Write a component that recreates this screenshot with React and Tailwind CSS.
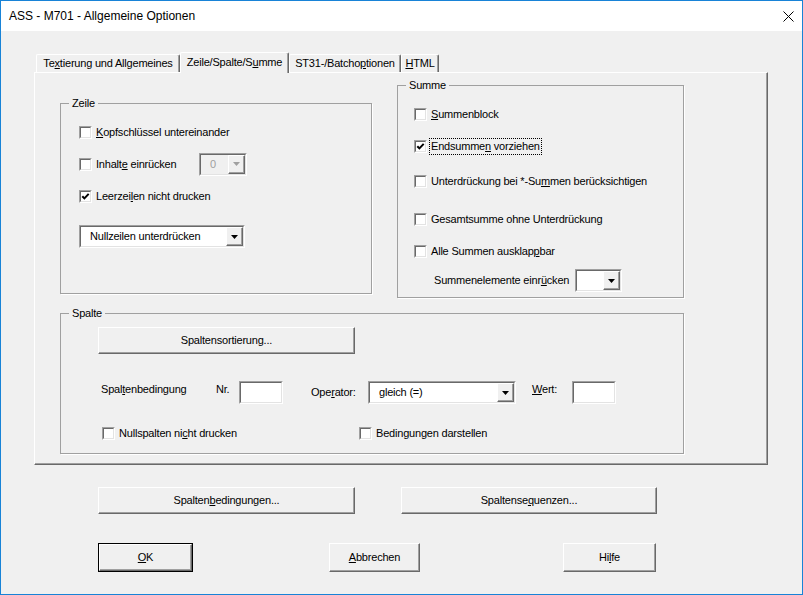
import React from "react";

// Windows classic dialog: ASS - M701 - Allgemeine Optionen

const raised =
  "bg-[#f0f0f0] border border-t-white border-l-white border-r-[#696969] border-b-[#696969] shadow-[inset_-1px_-1px_0_#a0a0a0]";

function Box({ checked }) {
  return (
    <span className="w-[13px] h-[13px] shrink-0 flex border border-t-[#a0a0a0] border-l-[#a0a0a0] border-b-white border-r-white">
      <span className="flex-1 flex items-center justify-center bg-white border border-t-[#696969] border-l-[#696969] border-b-[#e3e3e3] border-r-[#e3e3e3]">
        {checked && (
          <svg width="9" height="9" viewBox="0 0 9 9">
            <path d="M1.3 4.2 L3.4 6.4 L7.7 1.9" fill="none" stroke="#000" strokeWidth="2" />
          </svg>
        )}
      </span>
    </span>
  );
}

function Check({ checked, focus, className = "", children }) {
  return (
    <div className={"flex items-center h-[16px] " + className}>
      <Box checked={checked} />
      {focus ? (
        <span className="ml-[2px] px-[1px] leading-[15px] border border-dotted border-black">{children}</span>
      ) : (
        <span className="ml-[4px] whitespace-nowrap">{children}</span>
      )}
    </div>
  );
}

function Combo({ text, disabled, className = "" }) {
  return (
    <div className={"flex shrink-0 border border-t-[#a0a0a0] border-l-[#a0a0a0] border-b-white border-r-white " + className}>
      <div
        className={
          "flex-1 flex items-center border border-t-[#696969] border-l-[#696969] border-b-[#e3e3e3] border-r-[#e3e3e3] " +
          (disabled ? "bg-[#f0f0f0]" : "bg-white")
        }
      >
        <span className={"flex-1 pl-[9px] whitespace-nowrap " + (disabled ? "text-[#a0a0a0]" : "")}>{text}</span>
        <span className={"w-[17px] self-stretch flex items-center justify-center " + raised}>
          <svg width="7" height="4" viewBox="0 0 7 4">
            <path d="M0 0 H7 L3.5 4 Z" fill={disabled ? "#a0a0a0" : "#000"} />
          </svg>
        </span>
      </div>
    </div>
  );
}

function Input({ className = "" }) {
  return (
    <div className={"flex shrink-0 border border-t-[#a0a0a0] border-l-[#a0a0a0] border-b-white border-r-white " + className}>
      <div className="flex-1 bg-white border border-t-[#696969] border-l-[#696969] border-b-[#e3e3e3] border-r-[#e3e3e3]" />
    </div>
  );
}

function Btn({ className = "", children }) {
  return <div className={"flex items-center justify-center shrink-0 " + raised + " " + className}>{children}</div>;
}

function Group({ label, className = "", children }) {
  return (
    <div className={"flex flex-col shrink-0 border border-[#a0a0a0] shadow-[1px_1px_0_#fff] " + className}>
      <span className="self-start -mt-[7px] ml-[8px] px-[3px] bg-[#f0f0f0] leading-[13px]">{label}</span>
      {children}
    </div>
  );
}

const tab =
  "flex items-center justify-center shrink-0 rounded-t-[2px] border-t border-l border-r border-t-white border-l-white border-r-[#696969] shadow-[inset_-1px_0_0_#a0a0a0] whitespace-nowrap";

export default function App() {
  return (
    <div className="w-[803px] h-[595px] border border-[#1883d7] bg-[#f0f0f0] flex flex-col overflow-hidden font-['Liberation_Sans',Arial,sans-serif] text-[11px] leading-[13px] tracking-[-0.2px] text-black">
      <div className="h-[30px] shrink-0 bg-white flex items-center justify-between pl-[8px] pr-[8px]">
        <span className="text-[12px] leading-[16px] tracking-normal">ASS - M701 - Allgemeine Optionen</span>
        <svg width="11" height="11" viewBox="0 0 11 11">
          <path d="M0.5 0.5 L10.5 10.5 M10.5 0.5 L0.5 10.5" stroke="#000" strokeWidth="1" />
        </svg>
      </div>

      <div className="flex-1 pl-[33px] pt-[21px]">
        {/* tabs */}
        <div className="flex items-end h-[20px] pl-[2px]">
          <div className={tab + " w-[144px] h-[18px]"}>
            Te<u>x</u>tierung und Allgemeines
          </div>
          <div className={tab + " w-[109px] h-[21px] -mb-px relative z-10 bg-[#f0f0f0] pb-[2px]"}>
            Zeile/Spalte/S<u>u</u>mme
          </div>
          <div className={tab + " w-[112px] h-[18px]"}>
            ST31-/Batcho<u>p</u>tionen
          </div>
          <div className={tab + " w-[38px] h-[18px]"}>
            <u>H</u>TML
          </div>
        </div>

        {/* tab panel */}
        <div className="w-[734px] h-[393px] border border-t-white border-l-white border-r-[#696969] border-b-[#696969] shadow-[inset_-1px_-1px_0_#a0a0a0]">
          <div className="flex items-start pl-[25px]">
            <Group label="Zeile" className="mt-[30px] w-[312px] h-[191px]">
              <Check className="mt-[14px] ml-[18px]">
                <u>K</u>opfschlüssel untereinander
              </Check>
              <div className="mt-[16px] ml-[18px] flex items-center h-[16px]">
                <Box />
                <span className="ml-[4px] w-[103px]">
                  Inhalt<u>e</u> einrücken
                </span>
                <Combo disabled text="0" className="w-[48px] h-[23px]" />
              </div>
              <Check checked className="mt-[16px] ml-[18px]">
                Leerzei<u>l</u>en nicht drucken
              </Check>
              <Combo text="Nullzeilen unterdrücken" className="mt-[21px] ml-[18px] w-[166px] h-[23px]" />
            </Group>

            <Group label="Summe" className="mt-[12px] ml-[25px] w-[287px] h-[213px]">
              <Check className="mt-[14px] ml-[16px]">
                <u>S</u>ummenblock
              </Check>
              <Check checked focus className="mt-[16px] ml-[16px]">
                Endsumme<u>n</u> vorziehen
              </Check>
              <Check className="mt-[19px] ml-[16px]">
                Unterdrückung bei *-Su<u>m</u>men berücksichtigen
              </Check>
              <Check className="mt-[22px] ml-[16px]">
                Gesamtsumme ohne Unterdrückun<u>g</u>
              </Check>
              <Check className="mt-[16px] ml-[16px]">
                Alle Summen ausklap<u>p</u>bar
              </Check>
              <div className="mt-[10px] ml-[36px] flex items-center h-[23px]">
                <span className="w-[141px]">
                  Summenelemente einr<u>ü</u>cken
                </span>
                <Combo text="" className="w-[47px] h-[23px]" />
              </div>
            </Group>
          </div>

          <Group label="Spalte" className="mt-[15px] ml-[25px] w-[624px] h-[141px]">
            <Btn className="mt-[7px] ml-[37px] w-[257px] h-[27px]">Spaltensortierung...</Btn>
            <div className="mt-[27px] ml-[40px] flex items-start h-[23px]">
              <span className="mt-[2px] w-[115px]">
                Spal<u>t</u>enbedingung
              </span>
              <span className="mt-[2px] w-[23px]">Nr.</span>
              <Input className="w-[44px] h-[23px]" />
              <span className="mt-[5px] ml-[28px] w-[57px]">
                Ope<u>r</u>ator:
              </span>
              <Combo text="gleich (=)" className="w-[148px] h-[23px]" />
              <span className="mt-[2px] ml-[16px] w-[40px]">
                <u>W</u>ert:
              </span>
              <Input className="w-[44px] h-[23px]" />
            </div>
            <div className="mt-[21px] flex items-center h-[16px]">
              <Check className="ml-[41px] w-[257px]">
                Nullspalten ni<u>c</u>ht drucken
              </Check>
              <Check>
                Bedin<u>g</u>ungen darstellen
              </Check>
            </div>
          </Group>
        </div>

        <div className="mt-[22px] ml-[64px] flex">
          <Btn className="w-[257px] h-[27px]">
            Spalten<u>b</u>edingungen...
          </Btn>
          <Btn className="ml-[46px] w-[256px] h-[27px]">
            Spaltense<u>q</u>uenzen...
          </Btn>
        </div>

        <div className="mt-[29px] ml-[64px] flex">
          <div className="w-[95px] h-[29px] flex border border-black">
            <Btn className="flex-1">
              <u>O</u>K
            </Btn>
          </div>
          <Btn className="ml-[136px] w-[91px] h-[29px]">
            <u>A</u>bbrechen
          </Btn>
          <Btn className="ml-[143px] w-[93px] h-[29px]">
            Hi<u>l</u>fe
          </Btn>
        </div>
      </div>
    </div>
  );
}
